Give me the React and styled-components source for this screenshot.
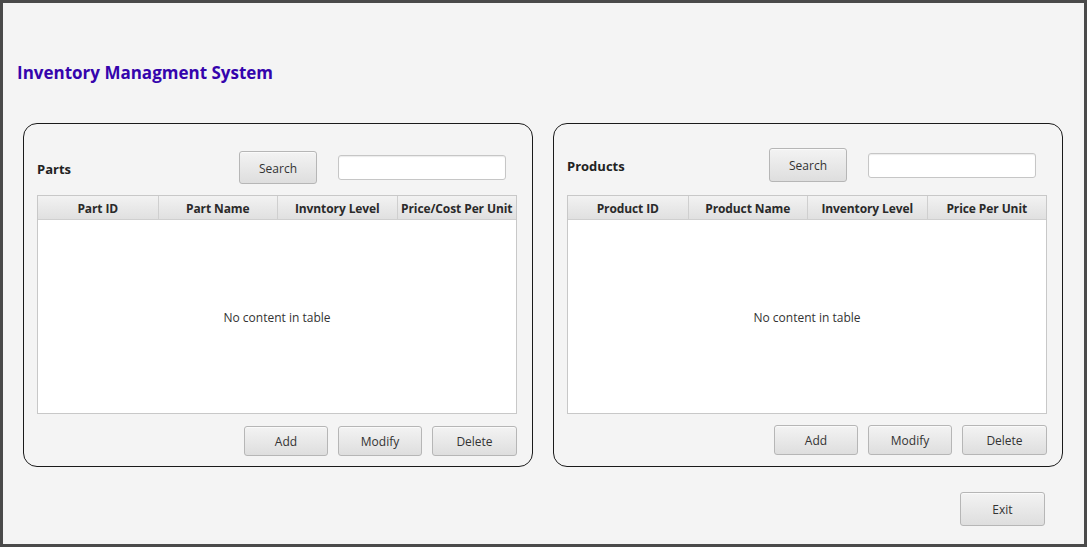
import React from "react";
import styled, { createGlobalStyle } from "styled-components";

const Global = createGlobalStyle`
  html, body { margin: 0; padding: 0; background: #f4f4f4; }
  * { box-sizing: border-box; }
`;

const Window = styled.div`
  width: 1087px;
  height: 547px;
  border: 3px solid #4a4a4a;
  background: #f4f4f4;
  font-family: "Open Sans", "Noto Sans", Arial, sans-serif;
  color: #333;
  display: flex;
  flex-direction: column;
`;

const Title = styled.h1`
  margin: 58px 0 0 14px;
  font-size: 17px;
  line-height: 24px;
  font-weight: 700;
  color: #3504ad;
`;

const PanelsRow = styled.div`
  display: flex;
  gap: 20px;
  margin-top: 38px;
  padding: 0 21px 0 20px;
`;

const Panel = styled.section`
  width: 510px;
  height: 344px;
  border: 1px solid #1a1a1a;
  border-radius: 14px;
  padding: 0 15px 0 13px;
  display: flex;
  flex-direction: column;
`;

const PanelHeader = styled.div`
  height: 71px;
  display: flex;
  align-items: flex-end;
  padding-bottom: ${(p) => p.$gap}px;
`;

const HeaderRow = styled.div`
  display: flex;
  align-items: center;
  height: ${(p) => p.$h}px;
`;

const PanelLabel = styled.div`
  width: 202px;
  padding-top: 2px;
  font-size: 13px;
  font-weight: 700;
  color: #222;
`;

const Button = styled.button`
  width: ${(p) => p.$w}px;
  height: ${(p) => p.$h}px;
  border: 1px solid #b6b6b6;
  border-radius: 3px;
  background: linear-gradient(#f3f3f3, #dedede);
  box-shadow: inset 0 1px 0 #fafafa;
  font-family: inherit;
  font-size: 12px;
  color: #333;
  padding: 1px 0 0;
  cursor: default;
`;

const SearchField = styled.input`
  margin-left: 21px;
  width: 168px;
  height: 25px;
  border: 1px solid #c6c6c6;
  border-radius: 3px;
  background: #fff;
  box-shadow: inset 0 1px 1px #ececec;
  outline: none;
  font-family: inherit;
  font-size: 12px;
`;

const Table = styled.div`
  width: 480px;
  height: 219px;
  border: 1px solid #c8c8c8;
  background: #fff;
  display: flex;
  flex-direction: column;
`;

const TableHead = styled.div`
  display: grid;
  grid-template-columns: repeat(4, 1fr);
  height: 24px;
  background: linear-gradient(#f2f2f2, #e0e0e0);
  border-bottom: 1px solid #cfcfcf;
`;

const HeadCell = styled.div`
  display: flex;
  align-items: center;
  justify-content: center;
  padding-top: 2px;
  font-size: 12px;
  font-weight: 700;
  letter-spacing: -0.1px;
  color: #2a2a2a;
  white-space: nowrap;
  border-left: ${(p) => (p.$first ? "none" : "1px solid #cfcfcf")};
`;

const TableBody = styled.div`
  flex: 1;
  display: flex;
  align-items: center;
  justify-content: center;
  font-size: 12px;
  color: #333;
  padding-top: 2px;
`;

const PanelFooter = styled.div`
  display: flex;
  justify-content: flex-end;
  gap: 10px;
  margin-top: ${(p) => p.$top}px;
`;

const BottomBar = styled.div`
  display: flex;
  justify-content: flex-end;
  margin-top: 25px;
  padding-right: 39px;
`;

function InventoryPanel({ label, columns, headerGap, headerH, footerTop }) {
  return (
    <Panel>
      <PanelHeader $gap={headerGap}>
        <HeaderRow $h={headerH}>
          <PanelLabel>{label}</PanelLabel>
          <Button $w={78} $h={headerH}>Search</Button>
          <SearchField type="text" />
        </HeaderRow>
      </PanelHeader>
      <Table>
        <TableHead>
          {columns.map((c, i) => (
            <HeadCell key={c} $first={i === 0}>
              {c}
            </HeadCell>
          ))}
        </TableHead>
        <TableBody>No content in table</TableBody>
      </Table>
      <PanelFooter $top={footerTop}>
        <Button $w={84} $h={30}>Add</Button>
        <Button $w={84} $h={30}>Modify</Button>
        <Button $w={85} $h={30}>Delete</Button>
      </PanelFooter>
    </Panel>
  );
}

export default function App() {
  return (
    <>
      <Global />
      <Window>
        <Title>Inventory Managment System</Title>
        <PanelsRow>
          <InventoryPanel
            label="Parts"
            columns={["Part ID", "Part Name", "Invntory Level", "Price/Cost Per Unit"]}
            headerGap={11}
            headerH={33}
            footerTop={12}
          />
          <InventoryPanel
            label="Products"
            columns={["Product ID", "Product Name", "Inventory Level", "Price Per Unit"]}
            headerGap={13}
            headerH={34}
            footerTop={11}
          />
        </PanelsRow>
        <BottomBar>
          <Button $w={85} $h={34}>Exit</Button>
        </BottomBar>
      </Window>
    </>
  );
}
